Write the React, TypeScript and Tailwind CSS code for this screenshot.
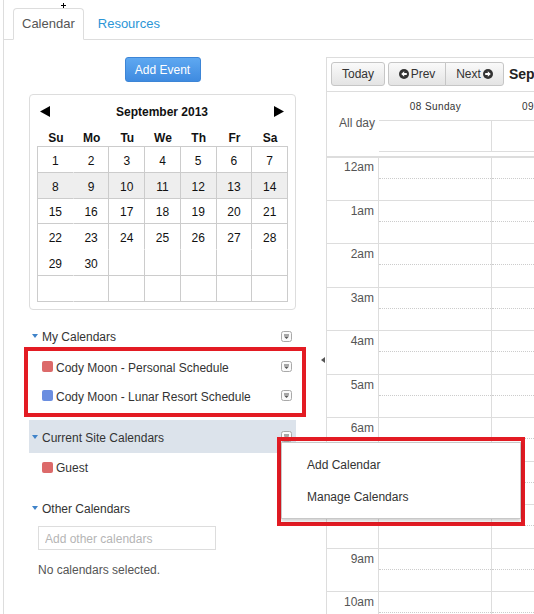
import clsx from "clsx";

const weeks: (number | null)[][] = [
  [1, 2, 3, 4, 5, 6, 7],
  [8, 9, 10, 11, 12, 13, 14],
  [15, 16, 17, 18, 19, 20, 21],
  [22, 23, 24, 25, 26, 27, 28],
  [29, 30, null, null, null, null, null],
  [null, null, null, null, null, null, null],
];

const dayNames = ["Su", "Mo", "Tu", "We", "Th", "Fr", "Sa"];

const hours = ["12am", "1am", "2am", "3am", "4am", "5am", "6am", "7am", "8am", "9am", "10am"];

const MenuCaret = () => (
  <svg width="11" height="11" viewBox="0 0 11 11" className="shrink-0">
    <rect x="0.5" y="0.5" width="10" height="10" rx="2" fill="#fafafa" stroke="#a9a9a9" />
    <path d="M3 4h5" stroke="#555" strokeWidth="1" />
    <path d="M3 5.5h5L5.5 8z" fill="#555" />
  </svg>
);

const Toggle = () => (
  <svg width="6" height="4" viewBox="0 0 6 4" className="shrink-0">
    <path d="M0 0h6L3 4z" fill="#3f83c9" />
  </svg>
);

const CircleArrow = ({ dir }: { dir: "left" | "right" }) => (
  <svg width="10" height="10" viewBox="0 0 10 10" className="shrink-0">
    <circle cx="5" cy="5" r="5" fill="#333" />
    {dir === "left" ? (
      <path d="M2.2 5L5.2 2.2V4H7.8V6H5.2V7.8z" fill="#fff" />
    ) : (
      <path d="M7.8 5L4.8 2.2V4H2.2V6H4.8V7.8z" fill="#fff" />
    )}
  </svg>
);

const SectionHeader = ({ label, className }: { label: string; className?: string }) => (
  <div className={clsx("flex items-center pl-[3px] pr-[4px]", className)}>
    <Toggle />
    <span className="ml-[4px] pt-[2px] text-[12px] text-[#333]">{label}</span>
    <span className="ml-auto">
      <MenuCaret />
    </span>
  </div>
);

const CalendarItem = ({ label, color, caret = true }: { label: string; color: string; caret?: boolean }) => (
  <div className="flex h-[29px] items-center pl-[13px] pr-[4px]">
    <span className="h-[11px] w-[11px] shrink-0 rounded-[2px]" style={{ backgroundColor: color }} />
    <span className="ml-[3px] pt-[2px] text-[12px] text-[#333]">{label}</span>
    {caret && (
      <span className="ml-auto">
        <MenuCaret />
      </span>
    )}
  </div>
);

export default function App() {
  return (
    <div className="relative h-[614px] w-[534px] overflow-hidden bg-white font-['Liberation_Sans',Arial,sans-serif] text-[12px] text-[#333]">
      <div className="ml-[3px] h-full border-l border-[#ddd] pt-[8px]">
        {/* Tabs */}
        <div className="flex w-[529px] border-b border-[#ddd] pl-[9px]">
          <div className="-mb-px h-[32px] rounded-t-[4px] border border-[#ddd] border-b-white bg-white px-[8px] leading-[30px] text-[13px] text-[#555]">
            Calendar
          </div>
          <div className="ml-[14px] leading-[31px] text-[13px] text-[#2b95d6]">Resources</div>
        </div>

        <div className="flex pt-[17px]">
          {/* Sidebar */}
          <div className="ml-[25px] w-[267px] shrink-0">
            <button className="mx-auto block h-[25px] w-[76px] rounded-[3px] border border-[#3d85d6] bg-linear-to-b from-[#5ea8f1] to-[#3f8be0] text-[12px] text-white">
              Add Event
            </button>

            {/* Mini calendar */}
            <div className="mt-[12px] h-[216px] rounded-[4px] border border-[#ddd] px-[7px] pt-[7px]">
              <div className="flex h-[18px] items-center justify-between pl-[3px] pr-[4px]">
                <svg width="10" height="11" viewBox="0 0 10 11">
                  <path d="M0 5.5L10 0v11z" fill="#000" />
                </svg>
                <span className="pt-px text-[12px] font-bold text-[#111]">September 2013</span>
                <svg width="10" height="11" viewBox="0 0 10 11">
                  <path d="M10 5.5L0 0v11z" fill="#000" />
                </svg>
              </div>
              <div className="mt-[8px] grid h-[18px] grid-cols-7 items-center pl-px">
                {dayNames.map((d) => (
                  <span key={d} className="pt-px text-center text-[12px] font-bold text-[#111]">
                    {d}
                  </span>
                ))}
              </div>
              <div className="grid grid-cols-7 border-l border-t border-[#ccc]">
                {weeks.map((week, ri) =>
                  week.map((day, ci) => (
                    <div
                      key={`${ri}-${ci}`}
                      className={clsx(
                        "flex h-[25.8px] items-center justify-center border-b border-r border-[#ccc] pt-[3px] text-[12px] text-[#111]",
                        ci === 0 && "border-r-transparent",
                        ri === 3 && "border-b-transparent",
                        ri === 1 && "bg-[#eee]"
                      )}
                    >
                      {day}
                    </div>
                  ))
                )}
              </div>
            </div>

            {/* Calendar lists */}
            <SectionHeader label="My Calendars" className="mt-[16px] h-[20px]" />
            <div className="mt-[6px]">
              <CalendarItem label="Cody Moon - Personal Schedule" color="#dc6a6a" />
              <CalendarItem label="Cody Moon - Lunar Resort Schedule" color="#6b8ee0" />
            </div>
            <SectionHeader label="Current Site Calendars" className="mt-[10px] h-[33px] bg-[#dce3eb]" />
            <div className="h-[28px] [&>div]:h-[28px]">
              <CalendarItem label="Guest" color="#dc6a6a" caret={false} />
            </div>
            <div className="mt-[17px] flex h-[20px] items-center pl-[3px]">
              <Toggle />
              <span className="ml-[4px] pt-[2px] text-[12px] text-[#333]">Other Calendars</span>
            </div>
            <input
              readOnly
              placeholder="Add other calendars"
              className="ml-[9px] mt-[8px] block h-[24px] w-[178px] border border-[#ddd] px-[6px] pt-px text-[12px] outline-none placeholder:text-[#b5b5b5]"
            />
            <div className="ml-[9px] mt-[12px] leading-[16px] text-[#555]">No calendars selected.</div>
          </div>

          {/* Week view */}
          <div className="ml-[30px] w-[300px] shrink-0 border-l border-t border-[#ddd]">
            <div className="flex h-[34px] items-start border-b border-[#ddd] pl-[4px] pt-[4px]">
              <button className="h-[24px] w-[54px] rounded-[3px] border border-[#c6c6c6] bg-linear-to-b from-[#fafafa] to-[#e4e4e4] text-[12px] text-[#333]">
                Today
              </button>
              <div className="ml-[3px] flex">
                <button className="flex h-[24px] w-[58px] items-center justify-center gap-[2px] rounded-l-[3px] border border-[#c6c6c6] bg-linear-to-b from-[#fafafa] to-[#e4e4e4] text-[12px] text-[#333]">
                  <CircleArrow dir="left" />
                  Prev
                </button>
                <button className="-ml-px flex h-[24px] w-[59px] items-center justify-center gap-[2px] rounded-r-[3px] border border-[#c6c6c6] bg-linear-to-b from-[#fafafa] to-[#e4e4e4] text-[12px] text-[#333]">
                  Next
                  <CircleArrow dir="right" />
                </button>
              </div>
              <span className="ml-[5px] leading-[24px] text-[14px] font-bold text-[#222]">September 2013</span>
            </div>

            {/* Day headers + all day */}
            <div className="flex">
              <div className="flex h-[60px] w-[52px] shrink-0 items-center justify-end pr-[4px] pt-px text-[#555]">All day</div>
              <div className="flex-1">
                <div className="flex h-[29px] border-b border-[#ddd]">
                  <div className="flex w-[113px] shrink-0 items-center justify-center text-[10px] tracking-[0.4px] text-[#333]">
                    08 Sunday
                  </div>
                  <div className="flex w-[113px] shrink-0 items-center justify-center text-[10px] tracking-[0.4px] text-[#333]">
                    09 Monday
                  </div>
                </div>
                <div className="flex h-[31px] border-b border-[#ddd]">
                  <div className="w-[113px] shrink-0 border-r border-[#ddd]" />
                  <div className="w-[113px] shrink-0 border-r border-[#ddd]" />
                </div>
              </div>
            </div>

            {/* Hour rows */}
            <div className="mt-[4px]">
              {hours.map((h, i) => (
                <div
                  key={h}
                  className={clsx(
                    "flex border-[#ddd]",
                    i === 0 ? "h-[44px] border-t-2" : "h-[43.44px] border-t"
                  )}
                >
                  <div
                    className={clsx(
                      "w-[52px] shrink-0 border-r border-[#ddd] pr-[4px] text-right leading-[14px] text-[#555]",
                      i === 0 ? "pt-[2px]" : "pt-[3px]"
                    )}
                  >
                    {h}
                  </div>
                  <div className="w-[113px] shrink-0 border-r border-[#ddd]">
                    <div className="h-[21px] border-b border-dotted border-[#ccc]" />
                  </div>
                  <div className="w-[113px] shrink-0 border-r border-[#ddd]">
                    <div className="h-[21px] border-b border-dotted border-[#ccc]" />
                  </div>
                </div>
              ))}
            </div>
          </div>
        </div>
      </div>

      {/* cursor mark */}
      <svg width="5" height="5" viewBox="0 0 5 5" className="absolute left-[61px] top-[3px]">
        <path d="M2.5 0v5M0 2.5h5" stroke="#000" strokeWidth="1" />
      </svg>

      {/* sidebar collapse handle */}
      <svg width="4" height="6" viewBox="0 0 4 6" className="absolute left-[321px] top-[357px]">
        <path d="M0 3L4 0v6z" fill="#555" />
      </svg>

      {/* annotation: my calendars */}
      <div className="absolute left-[24px] top-[347px] h-[70px] w-[282px] border-4 border-[#e31b23]" />

      {/* annotation + context menu */}
      <div className="absolute left-[277px] top-[437px] h-[89px] w-[248px] border-4 border-[#e31b23]">
        <div className="mt-px h-[77px] border border-[#c8c8c8] bg-white pt-[6px] shadow-[0_2px_4px_rgba(0,0,0,0.2)]">
          <div className="flex h-[32px] items-center pl-[25px] text-[12px] text-[#333]">Add Calendar</div>
          <div className="flex h-[32px] items-center pl-[25px] text-[12px] text-[#333]">Manage Calendars</div>
        </div>
      </div>
    </div>
  );
}
